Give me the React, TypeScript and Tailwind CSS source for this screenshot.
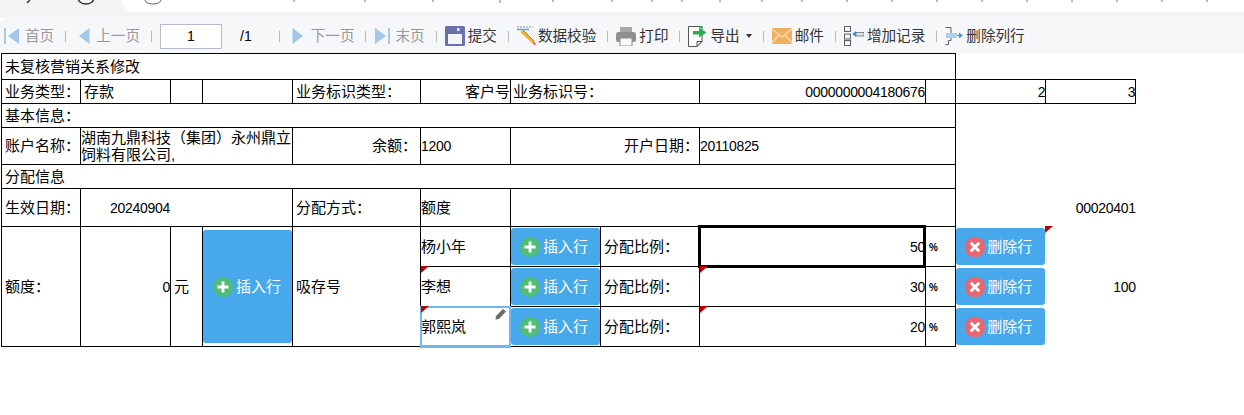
import type { ReactNode } from "react";

const cjk = { fontFamily: '"Liberation Sans", "Noto Sans CJK SC", sans-serif' };

function FirstIcon() {
  return (
    <svg width="18" height="16" viewBox="0 0 18 16" aria-hidden="true">
      <rect x="0" y="0" width="2" height="16" fill="#a9c8e8" />
      <path d="M15 0V16L4 8Z" fill="#a4c6e8" />
    </svg>
  );
}

function PrevIcon() {
  return (
    <svg width="19" height="16" viewBox="-5 0 19 16" aria-hidden="true">
      <path d="M10.5 0V16L0 8Z" fill="#a4c6e8" />
    </svg>
  );
}

function NextIcon() {
  return (
    <svg width="20" height="16" viewBox="-4 0 20 16" aria-hidden="true">
      <path d="M0.5 0V16L11 8Z" fill="#a4c6e8" />
    </svg>
  );
}

function LastIcon() {
  return (
    <svg width="18" height="16" viewBox="-1 0 18 16" aria-hidden="true">
      <path d="M0 0V16L11 8Z" fill="#a4c6e8" />
      <rect x="13" y="0" width="2" height="16" fill="#a9c8e8" />
    </svg>
  );
}

function SaveIcon() {
  return (
    <svg width="20" height="20" viewBox="0 0 20 20" aria-hidden="true">
      <rect x="0" y="0" width="20" height="20" rx="1.5" fill="#6a70ae" />
      <rect x="3" y="8" width="14" height="10" fill="#f3f4f9" />
      <rect x="12" y="2" width="2.5" height="3" fill="#e6e8f4" />
    </svg>
  );
}

function PencilIcon() {
  return (
    <svg width="20" height="20" viewBox="0 0 20 20" aria-hidden="true">
      <path d="M0 1H16" stroke="#8d8f92" strokeWidth="1" strokeDasharray="2 1" />
      <path d="M0 3.5H12" stroke="#53a8ea" strokeWidth="1.5" />
      <path d="M3 6L6 4L17 15L15 17Z" fill="#f2b632" />
      <path d="M15 17L17 15L19 18.5L18 19.5Z" fill="#ef6a50" />
      <path d="M6 4L17 15" stroke="#7a6a40" strokeWidth="0.8" />
    </svg>
  );
}

function PrintIcon() {
  return (
    <svg width="20" height="19" viewBox="0 0 20 19" aria-hidden="true">
      <rect x="4" y="0" width="12" height="5" fill="#a8a8a8" />
      <rect x="0" y="5" width="20" height="10" rx="2.5" fill="#8f8f8f" />
      <rect x="4" y="11" width="12" height="8" fill="#f6f7f9" stroke="#8f8f8f" />
    </svg>
  );
}

function ExportIcon() {
  return (
    <svg width="19" height="21" viewBox="0 0 19 21" aria-hidden="true">
      <path d="M0.5 0.5H14V15.5L9 20.5H0.5Z" fill="#ffffff" stroke="#555555" />
      <path d="M14 15.5H9V20.5Z" fill="#e2e2e2" stroke="#555555" />
      <rect x="11.5" y="0" width="3" height="2" fill="#2fb04f" />
      <path d="M5 5H11V1.5L18.5 6.5L11 11.5V8.5H5Z" fill="#2fb04f" />
    </svg>
  );
}

function MailIcon() {
  return (
    <svg width="20" height="16" viewBox="0 0 20 16" aria-hidden="true">
      <rect width="20" height="16" fill="#efb060" />
      <path d="M0 1L10 9L20 1M0 15L7 7M20 15L13 7" fill="none" stroke="#f8dcb4" strokeWidth="1.3" />
    </svg>
  );
}

function AddRecordIcon() {
  return (
    <svg width="20" height="20" viewBox="0 0 20 20" aria-hidden="true">
      <rect x="0.5" y="0.5" width="6" height="5" fill="none" stroke="#5f6062" />
      <rect x="0.5" y="8" width="6" height="5" fill="none" stroke="#5f6062" />
      <rect x="0.5" y="14.5" width="6" height="5" fill="none" stroke="#5f6062" />
      <path d="M8 8L12 5V11Z" fill="#3f9ae4" />
      <rect x="12" y="6.5" width="8" height="3.5" fill="#d7e8f8" stroke="#5f6062" strokeWidth="0.7" />
    </svg>
  );
}

function DelColIcon() {
  return (
    <svg width="18" height="20" viewBox="0 0 18 20" aria-hidden="true">
      <path d="M0.5 1.5H6V7M6 12V14.5H3.5V18.5H0.5" fill="none" stroke="#5f6062" />
      <rect x="1" y="7" width="11" height="5" fill="#a9d2f3" />
      <path d="M12 9.5H15" stroke="#3f9ae4" />
      <path d="M14 6.5L18 9.5L14 12.5Z" fill="#3f9ae4" />
    </svg>
  );
}

function PlusBadge() {
  return (
    <svg width="20" height="20" viewBox="0 0 20 20" className="shrink-0" aria-hidden="true">
      <circle cx="10" cy="10" r="10" fill="#52bd76" />
      <path d="M10 4.5V15.5M4.5 10H15.5" stroke="#ffffff" strokeWidth="2.8" />
    </svg>
  );
}

function CrossBadge() {
  return (
    <svg width="20" height="20" viewBox="0 0 20 20" className="shrink-0" aria-hidden="true">
      <rect width="20" height="20" rx="9" fill="#e8676f" />
      <path d="M5.8 5.8L14.2 14.2M14.2 5.8L5.8 14.2" stroke="#ffffff" strokeWidth="3" />
    </svg>
  );
}

function ToolItem({
  icon,
  label,
  muted,
  gap = "gap-[3px]",
  pad = "pr-[11px]",
}: {
  icon: ReactNode;
  label: ReactNode;
  muted?: boolean;
  gap?: string;
  pad?: string;
}) {
  return (
    <div
      className={`flex h-[20px] items-center pl-[8px] first:pl-[4px] ${gap} ${pad} ${
        muted ? "text-[#999]" : "text-[#333]"
      }`}
    >
      {icon}
      <span className="whitespace-nowrap">{label}</span>
    </div>
  );
}

function Sep() {
  return <span className="h-[11px] w-px shrink-0 bg-[#b8babd]" />;
}

function Toolbar() {
  return (
    <div className="flex h-[35px] items-center rounded-tl-[6px] bg-[#f6f7f9] pt-px text-[14.6px]">
      <ToolItem muted icon={<FirstIcon />} label="首页" />
      <Sep />
      <ToolItem muted icon={<PrevIcon />} label="上一页" />
      <Sep />
      <div className="flex items-center pl-[8px] pr-[27px] text-[14px] text-black">
        <input
          readOnly
          value="1"
          className="h-[25px] w-[62px] border border-[#b5bad0] bg-white text-center outline-none"
        />
        <span className="ml-[18px]">/1</span>
      </div>
      <Sep />
      <ToolItem muted icon={<NextIcon />} label="下一页" />
      <Sep />
      <ToolItem muted icon={<LastIcon />} label="末页" />
      <Sep />
      <ToolItem icon={<SaveIcon />} label="提交" />
      <Sep />
      <ToolItem icon={<PencilIcon />} gap="gap-[1px]" label="数据校验" />
      <Sep />
      <ToolItem icon={<PrintIcon />} label="打印" />
      <Sep />
      <ToolItem
        icon={<ExportIcon />}
        gap="gap-[3px]"
        label={
          <span className="flex items-center gap-[6px]">
            导出
            <span className="h-0 w-0 border-x-[3.5px] border-t-[4px] border-x-transparent border-t-[#333]" />
          </span>
        }
      />
      <Sep />
      <ToolItem icon={<MailIcon />} label="邮件" />
      <Sep />
      <ToolItem icon={<AddRecordIcon />} label="增加记录" />
      <Sep />
      <ToolItem icon={<DelColIcon />} label="删除列行" />
    </div>
  );
}

function InsertButton({ tall }: { tall?: boolean }) {
  return (
    <button
      type="button"
      className={`flex w-[89px] items-center gap-[3px] rounded-[3px] bg-[#47a8ec] text-[15px] text-white ${
        tall ? "h-[113px] pl-[10px]" : "h-[37px] pl-[9px]"
      }`}
    >
      <PlusBadge />
      插入行
    </button>
  );
}

function DeleteButton() {
  return (
    <button
      type="button"
      className="flex h-[37px] w-[89px] items-center gap-[2px] rounded-[3px] bg-[#47a8ec] pl-[9px] text-[15px] text-white"
    >
      <CrossBadge />
      删除行
    </button>
  );
}

function RedMark({ right }: { right?: boolean }) {
  return (
    <span
      className={`absolute top-[-1px] h-0 w-0 border-r-[8px] border-t-[7px] border-r-transparent border-t-[#c00000] ${
        right ? "left-[89px]" : "left-0"
      }`}
    />
  );
}

function Num({ children }: { children: ReactNode }) {
  return <span className="text-[14px] tracking-[-0.3px]">{children}</span>;
}

const cell = "border border-black px-[3px] align-middle whitespace-nowrap";
const noLine = "px-0 align-middle whitespace-nowrap";

function AllocRow({
  name,
  pct,
  mark,
  editing,
  active,
  corner,
}: {
  name: string;
  pct: string;
  mark?: boolean;
  editing?: boolean;
  active?: boolean;
  corner?: boolean;
}) {
  return (
    <>
      <td className={`${cell} relative !px-0`}>
        {editing && (
          <>
            <span className="absolute inset-x-[-1px] bottom-[-2px] top-[-1px] border-x-[2px] border-b-[3px] border-t-[2px] border-[#6db8ee]" />
            <svg width="12" height="12" viewBox="0 0 12 12" className="absolute right-[3px] top-[1px]" aria-hidden="true">
              <path d="M1 8L8 1L11 3.5L4 11L0.5 11.5Z" fill="#6b6b6b" />
            </svg>
          </>
        )}
        {mark && <RedMark />}
        <span>{name}</span>
      </td>
      <td className={`${cell} !px-0`}>
        <InsertButton />
      </td>
      <td className={cell}>分配比例：</td>
      <td className={`${cell} relative !px-0 text-right`}>
        {mark && <RedMark />}
        {active && <span className="absolute bottom-[-2px] left-[-2px] right-[-1px] top-[-2px] border-[3px] border-black" />}
        <Num>{pct}</Num>
      </td>
      <td className={`${cell} !px-0`}>
        <span className="pl-[3px] text-[10px] font-bold">%</span>
      </td>
      <td className="relative p-0 align-middle">
        {corner && <RedMark right />}
        <DeleteButton />
      </td>
    </>
  );
}

function DataTable() {
  return (
    <table className="ml-px w-[1134px] table-fixed border-collapse bg-white text-black">
      <colgroup>
        <col className="w-[79px]" />
        <col className="w-[90px]" />
        <col className="w-[32px]" />
        <col className="w-[90px]" />
        <col className="w-[128px]" />
        <col className="w-[90px]" />
        <col className="w-[90px]" />
        <col className="w-[99px]" />
        <col className="w-[226px]" />
        <col className="w-[30px]" />
        <col className="w-[90px]" />
        <col className="w-[90px]" />
      </colgroup>
      <tbody>
        <tr className="h-[26px]">
          <td colSpan={10} className={cell}>未复核营销关系修改</td>
        </tr>
        <tr className="h-[24px]">
          <td className={cell}>业务类型：</td>
          <td className={cell}>存款</td>
          <td className={cell} />
          <td className={cell} />
          <td className={cell}>业务标识类型：</td>
          <td className={`${cell} !pr-0 text-right`}>客户号</td>
          <td colSpan={2} className={`${cell} !pl-[2px]`}>业务标识号：</td>
          <td className={`${cell} !px-0 text-right`}><Num>0000000004180676</Num></td>
          <td className={cell} />
          <td className={`${cell} !px-0 text-right`}><Num>2</Num></td>
          <td className={`${cell} !px-0 text-right`}><Num>3</Num></td>
        </tr>
        <tr className="h-[24px]">
          <td colSpan={10} className={cell}>基本信息：</td>
        </tr>
        <tr className="h-[37px]">
          <td className={cell}>账户名称：</td>
          <td colSpan={3} className={`${cell} !whitespace-normal !px-0 leading-[17px]`}>
            湖南九鼎科技（集团）永州鼎立饲料有限公司,
          </td>
          <td className={`${cell} text-right`}>余额：</td>
          <td className={`${cell} !px-0`}><Num>1200</Num></td>
          <td colSpan={2} className={`${cell} !px-0 text-right`}>开户日期：</td>
          <td colSpan={2} className={`${cell} !px-0`}><Num>20110825</Num></td>
        </tr>
        <tr className="h-[24px]">
          <td colSpan={10} className={cell}>分配信息</td>
        </tr>
        <tr className="h-[38px]">
          <td className={cell}>生效日期：</td>
          <td colSpan={3} className={`${cell} !pl-[29px]`}><Num>20240904</Num></td>
          <td className={cell}>分配方式：</td>
          <td className={`${cell} !px-0`}>额度</td>
          <td colSpan={4} className={cell} />
          <td className={noLine} />
          <td className={`${noLine} text-right`}><Num>00020401</Num></td>
        </tr>
        <tr className="h-[40px]">
          <td rowSpan={3} className={cell}>额度：</td>
          <td rowSpan={3} className={`${cell} !px-0 text-right`}><Num>0</Num></td>
          <td rowSpan={3} className={cell}>元</td>
          <td rowSpan={3} className={`${cell} !px-0`}><InsertButton tall /></td>
          <td rowSpan={3} className={cell}>吸存号</td>
          <AllocRow name="杨小年" pct="50" active corner />
          <td rowSpan={3} className={`${noLine} text-right`}><Num>100</Num></td>
        </tr>
        <tr className="h-[40px]">
          <AllocRow name="李想" pct="30" mark />
        </tr>
        <tr className="h-[40px]">
          <AllocRow name="郭熙岚" pct="20" mark editing />
        </tr>
      </tbody>
    </table>
  );
}

export default function App() {
  return (
    <div className="h-[415px] w-[1244px] overflow-hidden bg-white text-[15px] leading-[18px] text-[#1a1a1a]" style={cjk}>
      <div className="flex h-[18px] bg-[#f3f4f5]">
        <svg width="122" height="12" viewBox="0 0 122 12" className="shrink-0" aria-hidden="true">
          <path d="M27 3L30 0" stroke="#333" strokeWidth="1.5" fill="none" />
          <path d="M78 -2A8 6 0 0 0 94 -2" stroke="#333" strokeWidth="1.5" fill="none" />
        </svg>
        <div className="h-[12px] flex-1 rounded-bl-[12px] bg-white">
          <svg width="1122" height="6" viewBox="0 0 1122 6" aria-hidden="true">
            <path d="M23 0A8 4 0 0 0 39 0" stroke="#666" fill="none" />
            <path
              d="M172 0V2M243 0V2M311 0V2M378 0V3M431 0V2M490 0V2M530 0V2M560 0V2M598 0V2M640 0V2M680 0V2M725 0V2M770 0V2M815 0V2M860 0V2M905 0V2M950 0V2M995 0V2M1040 0V2M1085 0V2"
              stroke="#777"
              fill="none"
            />
          </svg>
        </div>
      </div>
      <Toolbar />
      <DataTable />
    </div>
  );
}
